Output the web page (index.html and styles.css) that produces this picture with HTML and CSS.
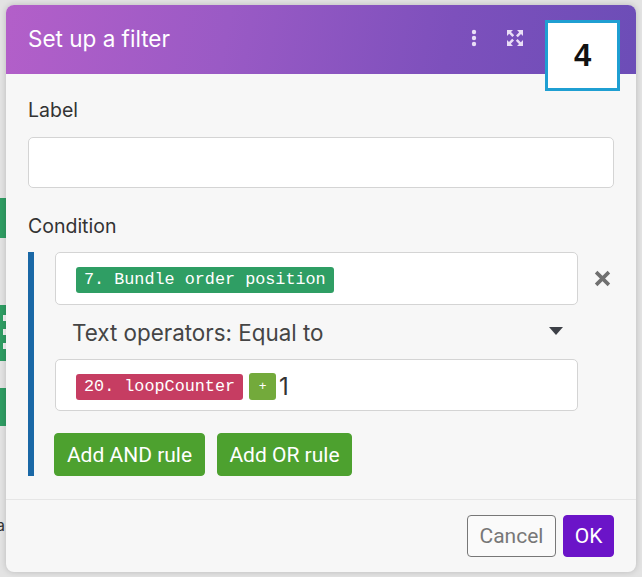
FILE: index.html
```html
<!DOCTYPE html>
<html lang="en">
<head>
<meta charset="utf-8">
<title>Set up a filter</title>
<link rel="stylesheet" href="styles.css">
</head>
<body>
<div class="canvas">
  <div class="bg-node n1"></div>
  <div class="bg-node n2"><span></span><span></span><span></span></div>
  <div class="bg-node n3"></div>
  <div class="bg-text t1">l</div>
  <div class="bg-text t2">a</div>
</div>
<div class="dialog">
  <div class="header">
    <div class="title">Set up a filter</div>
    <div class="hicons">
      <svg class="dots" width="8" height="18" viewBox="0 0 8 18"><circle cx="4" cy="3" r="2.2"/><circle cx="4" cy="9" r="2.2"/><circle cx="4" cy="15" r="2.2"/></svg>
      <svg class="expand" width="18" height="18" viewBox="0 0 18 18">
        <path d="M1 1h6l-2 2 3.2 3.2-1.8 1.8L3.2 4.8 1 7z"/>
        <path d="M17 1v6l-2-2-3.2 3.2-1.8-1.8L13.2 3.2 11 1z"/>
        <path d="M1 17v-6l2 2 3.2-3.2 1.8 1.8L4.8 14.8 7 17z"/>
        <path d="M17 17h-6l2-2-3.2-3.2 1.8-1.8 3.2 3.2L17 11z"/>
      </svg>
    </div>
  </div>
  <div class="body">
    <div class="field-label">Label</div>
    <div class="input"></div>
    <div class="field-label cond-label">Condition</div>
    <div class="condition">
      <div class="bar"></div>
      <div class="rules">
        <div class="rule-row">
          <div class="input rule-input"><span class="pill pill-green">7. Bundle order position</span></div>
          <svg class="remove" width="17" height="17" viewBox="0 0 16 16"><path d="M2 2L14 14M14 2L2 14" stroke="#707070" stroke-width="3.4" stroke-linecap="butt"/></svg>
        </div>
        <div class="select-row">
          <span>Text operators: Equal to</span>
          <svg class="caret" width="14" height="8" viewBox="0 0 14 8"><path d="M0 0h14L7 8z" fill="#3d4047"/></svg>
        </div>
        <div class="input rule-input second"><span class="pill pill-red">20. loopCounter</span><span class="pill pill-plus">+</span><span class="value">1</span></div>
        <div class="actions">
          <button class="btn btn-green">Add AND rule</button>
          <button class="btn btn-green">Add OR rule</button>
        </div>
      </div>
    </div>
  </div>
  <div class="footer">
    <button class="btn btn-cancel">Cancel</button>
    <button class="btn btn-ok">OK</button>
  </div>
</div>
<div class="badge">4</div>
</body>
</html>
```
FILE: styles.css
```css
html, body {
  margin: 0;
  padding: 0;
}
body {
  width: 642px;
  height: 577px;
  background: #e3e3e3;
  font-family: Inter, "Noto Sans", sans-serif;
  position: relative;
  overflow: hidden;
}
.canvas {
  position: absolute;
  left: 0;
  top: 0;
  width: 642px;
  height: 577px;
}
.bg-node {
  position: absolute;
  left: 0;
  width: 8px;
  background: #2f9d63;
}
.n1 { top: 198px; height: 40px; }
.n2 {
  top: 305px;
  height: 56px;
  background: #2f9d63;
}
.n2 span {
  position: absolute;
  left: 3px;
  width: 5px;
  height: 6px;
  background: #f4f4f4;
}
.n2 span:nth-child(1) { top: 10px; }
.n2 span:nth-child(2) { top: 24px; }
.n2 span:nth-child(3) { top: 38px; }
.n3 { top: 388px; height: 38px; }
.bg-text {
  position: absolute;
  left: -6px;
  font-size: 20px;
  color: #333;
}
.t1 { top: 474px; }
.t2 { top: 515px; font-size: 16px; left: -4px; }

.dialog {
  position: relative;
  margin: 5px 0 0 6px;
  width: 630px;
  height: 567px;
  background: #f7f7f7;
  border-radius: 8px;
  overflow: hidden;
  box-shadow: 0 0 6px rgba(0,0,0,0.18);
  display: flex;
  flex-direction: column;
}
.header {
  height: 69px;
  flex: none;
  display: flex;
  align-items: center;
  padding: 0 22px;
  background: linear-gradient(100deg, #b35fc9 0%, #9a5ac5 35%, #7d50bc 70%, #6c4db7 100%);
}
.title {
  flex: 1;
  color: #fff;
  font-size: 22.5px;
  font-weight: 400;
  margin-top: -2px;
}
.hicons {
  display: flex;
  align-items: center;
  gap: 28px;
  margin-right: 90px;
  margin-top: -4px;
}
.dots { fill: #e9def6; }
.expand { fill: #e9def6; }

.body {
  flex: 1;
  padding: 24px 22px 0 22px;
}
.field-label {
  font-size: 19.5px;
  line-height: 24px;
  color: #333;
}
.input {
  margin-top: 15px;
  height: 49px;
  background: #fff;
  border: 1px solid #d4d4d4;
  border-radius: 5px;
}
.cond-label {
  margin-top: 26px;
}
.condition {
  margin-top: 14px;
  display: flex;
  height: 224px;
}
.bar {
  width: 6px;
  flex: none;
  background: #1a68a6;
}
.rules {
  margin-left: 21px;
  flex: 1;
  display: flex;
  flex-direction: column;
}
.rule-row {
  display: flex;
  align-items: center;
}
.rule-input {
  margin-top: 0;
  width: 523px;
  height: 53px;
  display: flex;
  align-items: center;
  padding: 3px 0 0 20px;
  box-sizing: border-box;
  flex: none;
}
.rule-input.second {
  height: 52px;
}
.remove {
  margin-left: 16px;
}
.select-row {
  width: 523px;
  height: 55px;
  box-sizing: border-box;
  display: flex;
  align-items: center;
  justify-content: space-between;
  padding: 0 15px 0 17px;
  font-size: 22.4px;
  color: #454545;
}
.caret { margin-top: -2px; }
.pill {
  display: inline-block;
  height: 26px;
  line-height: 26px;
  padding: 0 8px;
  border-radius: 3px;
  color: #fff;
  font-family: "Liberation Mono", "DejaVu Sans Mono", monospace;
  font-size: 16.8px;
}
.pill-green { background: #2f9e64; }
.pill-red { background: #c63d62; }
.pill-plus {
  background: #73aa3b;
  margin-left: 6px;
  width: 27px;
  height: 27px;
  line-height: 27px;
  padding: 0;
  text-align: center;
  font-size: 13px;
}
.value {
  margin-left: 3px;
  font-size: 24px;
  color: #333;
}
.actions {
  display: flex;
  gap: 12px;
  margin-top: 22px;
  margin-left: -1px;
}
.btn {
  font-family: Roboto, "Liberation Sans", sans-serif;
  font-size: 21px;
  border-radius: 4px;
  height: 43px;
  cursor: pointer;
}
.btn-green {
  background: #4da12f;
  color: #fff;
  border: 1px solid #4da12f;
  padding: 0;
}
.actions .btn-green:first-child { width: 151px; }
.actions .btn-green:last-child { width: 135px; }
.footer {
  flex: none;
  height: 57px;
  border-top: 1px solid #e6e6e6;
  padding: 15px 22px 0 22px;
  display: flex;
  justify-content: flex-end;
  align-items: flex-start;
  gap: 7px;
}
.btn-cancel {
  background: #fafafa;
  border: 1px solid #777;
  color: #777;
  width: 89px;
  height: 42px;
  padding: 0;
}
.btn-ok {
  background: #6b14c8;
  border: 1px solid #6b14c8;
  color: #fff;
  width: 51px;
  height: 42px;
  padding: 0;
}
.badge {
  position: absolute;
  left: 545px;
  top: 20px;
  width: 69px;
  height: 65px;
  border: 3px solid #1f9fd2;
  background: #fff;
  color: #111;
  font-family: "Liberation Sans", Arial, sans-serif;
  font-weight: 700;
  font-size: 31px;
  display: flex;
  align-items: center;
  justify-content: center;
}
```
